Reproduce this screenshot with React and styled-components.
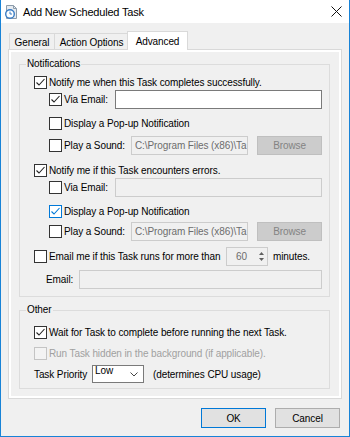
import styled, { createGlobalStyle } from "styled-components";

const GlobalStyle = createGlobalStyle`
  html, body {
    margin: 0;
    padding: 0;
    background: #ffffff;
  }
  body {
    font-family: "Liberation Sans", Arial, sans-serif;
    font-size: 10px;
    letter-spacing: -0.1px;
    color: #000;
  }
  * {
    box-sizing: border-box;
  }
`;

const Window = styled.div`
  width: 350px;
  height: 437px;
  display: flex;
  flex-direction: column;
  background: #f0f0f0;
  border: 1px solid #1883d7;
  border-top: none;
`;

const TitleBar = styled.div`
  height: 23px;
  display: flex;
  align-items: center;
  gap: 4px;
  padding: 0 7px 0 2px;
  background: #fff;
`;

const Title = styled.span`
  flex: 1;
  font-size: 11px;
  letter-spacing: -0.2px;
`;

const TabStrip = styled.div`
  height: 26px;
  display: flex;
  align-items: flex-end;
  padding-left: 8px;
`;

const Tab = styled.div`
  position: relative;
  z-index: ${(p) => (p.$active ? 1 : 0)};
  width: ${(p) => p.$w}px;
  height: ${(p) => (p.$active ? 19 : 16)}px;
  margin-left: ${(p) => p.$ml || 0}px;
  margin-bottom: ${(p) => (p.$active ? -1 : 0)}px;
  padding-top: ${(p) => (p.$active ? 0 : 1)}px;
  display: flex;
  align-items: center;
  justify-content: center;
  background: ${(p) => (p.$active ? "#fff" : "#f0f0f0")};
  border: 1px solid #d9d9d9;
  border-bottom: none;
`;

const Panel = styled.div`
  height: 350px;
  margin: 0 7px;
  padding: 2px;
  background: #fff;
  border: 1px solid #d9d9d9;
`;

const Page = styled.div`
  height: 100%;
  display: flex;
  flex-direction: column;
  gap: 13px;
  padding: 12px 9px 7px 8px;
  background: #f0f0f0;
`;

const Group = styled.div`
  position: relative;
  padding: ${(p) => p.$pt}px 7px ${(p) => p.$pb}px 14px;
  border: 1px solid #dcdcdc;
`;

const GroupLabel = styled.span`
  position: absolute;
  top: -7px;
  left: 6px;
  padding: 0 1px;
  line-height: 12px;
  background: #f0f0f0;
`;

const Row = styled.div`
  height: 16px;
  display: flex;
  align-items: center;
  margin-top: ${(p) => p.$mt || 0}px;
  padding-left: ${(p) => p.$indent || 0}px;
`;

const Box = styled.span`
  width: 13px;
  height: 13px;
  flex: none;
  display: flex;
  align-items: center;
  justify-content: center;
  margin-right: 2px;
  background: ${(p) => (p.$disabled ? "#f3f3f3" : "#fff")};
  border: 1px solid
    ${(p) => (p.$disabled ? "#c4c4c4" : p.$focus ? "#0078d7" : "#333")};
`;

const Label = styled.span`
  flex: none;
  width: ${(p) => (p.$w ? `${p.$w}px` : "auto")};
  white-space: nowrap;
  color: ${(p) => (p.$disabled ? "#a0a0a0" : "#000")};
  margin-left: ${(p) => p.$ml || 0}px;
`;

const TextBox = styled.div`
  width: ${(p) => p.$w}px;
  height: 19px;
  flex: none;
  display: flex;
  align-items: center;
  padding-left: 3px;
  overflow: hidden;
  white-space: nowrap;
  color: #6d6d6d;
  background: ${(p) => (p.$disabled ? "#f0f0f0" : "#fff")};
  border: 1px solid ${(p) => (p.$disabled ? "#cccccc" : "#7a7a7a")};
`;

const Browse = styled.div`
  width: 65px;
  height: 19px;
  flex: none;
  margin-left: 9px;
  display: flex;
  align-items: center;
  justify-content: center;
  color: #838383;
  background: #cccccc;
  border: 1px solid #bfbfbf;
`;

const Spin = styled.div`
  width: 42px;
  height: 19px;
  flex: none;
  display: flex;
  background: #f0f0f0;
  border: 1px solid #cccccc;
  color: #6d6d6d;
`;

const SpinValue = styled.div`
  flex: 1;
  display: flex;
  align-items: center;
  justify-content: center;
`;

const SpinArrows = styled.div`
  width: 11px;
  display: flex;
  flex-direction: column;
  align-items: center;
  justify-content: center;
  gap: 3px;
`;

const Select = styled.div`
  width: 52px;
  height: 18px;
  flex: none;
  display: flex;
  justify-content: space-between;
  padding: 0 5px 0 2px;
  line-height: 9px;
  background: #fff;
  border: 1px solid #7a7a7a;
`;

const Chevron = styled.svg`
  align-self: center;
`;

const Footer = styled.div`
  flex: 1;
  display: flex;
  justify-content: flex-end;
  align-items: flex-start;
  gap: 9px;
  padding: 9px 9px 0 0;
`;

const Button = styled.button`
  width: 65px;
  height: 20px;
  padding: 0;
  font: inherit;
  letter-spacing: inherit;
  color: #000;
  background: #e1e1e1;
  border: 1px solid ${(p) => (p.$default ? "#0078d7" : "#adadad")};
`;

const Check = ({ checked, focus, disabled }) => (
  <Box $focus={focus} $disabled={disabled}>
    {checked && (
      <svg width="11" height="11" viewBox="0 0 11 11">
        <path
          d="M1.5 5.5 L4 8 L9.5 2"
          fill="none"
          stroke={focus ? "#0078d7" : "#222"}
          strokeWidth="1.1"
        />
      </svg>
    )}
  </Box>
);

const TaskIcon = () => (
  <svg width="16" height="16" viewBox="0 0 16 16">
    <path d="M3.5 1.5h7l3 3v10h-10z" fill="#e6ebf0" stroke="#8d9cab" />
    <path d="M10.5 1.5v3h3" fill="none" stroke="#8d9cab" />
    <circle cx="7" cy="10" r="4.3" fill="#fff" stroke="#3a7cc4" strokeWidth="1.4" />
    <path d="M7 7.6V10h2" stroke="#3a7cc4" fill="none" />
  </svg>
);

const CloseIcon = () => (
  <svg width="11" height="11" viewBox="0 0 11 11">
    <path d="M0.5 0.5 L10.5 10.5 M10.5 0.5 L0.5 10.5" stroke="#111" strokeWidth="1" />
  </svg>
);

// the field only shows the start of the path
const soundPath = "C:\\Program Files (x86)\\Ta";

const App = () => {
  return (
    <>
      <GlobalStyle />
      <Window>
        <TitleBar>
          <TaskIcon />
          <Title>Add New Scheduled Task</Title>
          <CloseIcon />
        </TitleBar>
        <TabStrip>
          <Tab $w={46}>General</Tab>
          <Tab $w={75} $ml={-1}>Action Options</Tab>
          <Tab $w={61} $ml={-2} $active>Advanced</Tab>
        </TabStrip>
        <Panel>
          <Page>
            <Group $pt={9} $pb={9}>
              <GroupLabel>Notifications</GroupLabel>
              <Row>
                <Check checked />
                <Label>Notify me when this Task completes successfully.</Label>
              </Row>
              <Row $mt={1} $indent={15}>
                <Check checked />
                <Label $w={51}>Via Email:</Label>
                <TextBox $w={207} />
              </Row>
              <Row $mt={8} $indent={15}>
                <Check />
                <Label>Display a Pop-up Notification</Label>
              </Row>
              <Row $mt={6} $indent={15}>
                <Check />
                <Label $w={67}>Play a Sound:</Label>
                <TextBox $w={117} $disabled>{soundPath}</TextBox>
                <Browse>Browse</Browse>
              </Row>
              <Row $mt={9}>
                <Check checked />
                <Label>Notify me if this Task encounters errors.</Label>
              </Row>
              <Row $mt={1} $indent={15}>
                <Check />
                <Label $w={51}>Via Email:</Label>
                <TextBox $w={207} $disabled />
              </Row>
              <Row $mt={8} $indent={15}>
                <Check checked focus />
                <Label>Display a Pop-up Notification</Label>
              </Row>
              <Row $mt={4} $indent={15}>
                <Check />
                <Label $w={67}>Play a Sound:</Label>
                <TextBox $w={117} $disabled>{soundPath}</TextBox>
                <Browse>Browse</Browse>
              </Row>
              <Row $mt={9}>
                <Check />
                <Label $w={177}>Email me if this Task runs for more than</Label>
                <Spin>
                  <SpinValue>60</SpinValue>
                  <SpinArrows>
                    <svg width="5" height="3" viewBox="0 0 5 3">
                      <path d="M0 3 L2.5 0 L5 3z" fill="#606060" />
                    </svg>
                    <svg width="5" height="3" viewBox="0 0 5 3">
                      <path d="M0 0 L2.5 3 L5 0z" fill="#606060" />
                    </svg>
                  </SpinArrows>
                </Spin>
                <Label $ml={5}>minutes.</Label>
              </Row>
              <Row $mt={7} $indent={12}>
                <Label $w={33}>Email:</Label>
                <TextBox $w={243} $disabled />
              </Row>
            </Group>
            <Group $pt={13} $pb={6}>
              <GroupLabel>Other</GroupLabel>
              <Row>
                <Check checked />
                <Label>Wait for Task to complete before running the next Task.</Label>
              </Row>
              <Row $mt={5}>
                <Check disabled />
                <Label $disabled>Run Task hidden in the background (if applicable).</Label>
              </Row>
              <Row $mt={5}>
                <Label $w={58}>Task Priority</Label>
                <Select>
                  <span>Low</span>
                  <Chevron width="8" height="5" viewBox="0 0 8 5">
                    <path d="M0.5 0.5 L4 4 L7.5 0.5" fill="none" stroke="#444" />
                  </Chevron>
                </Select>
                <Label $ml={9}>(determines CPU usage)</Label>
              </Row>
            </Group>
          </Page>
        </Panel>
        <Footer>
          <Button $default>OK</Button>
          <Button>Cancel</Button>
        </Footer>
      </Window>
    </>
  );
};

export default App;
